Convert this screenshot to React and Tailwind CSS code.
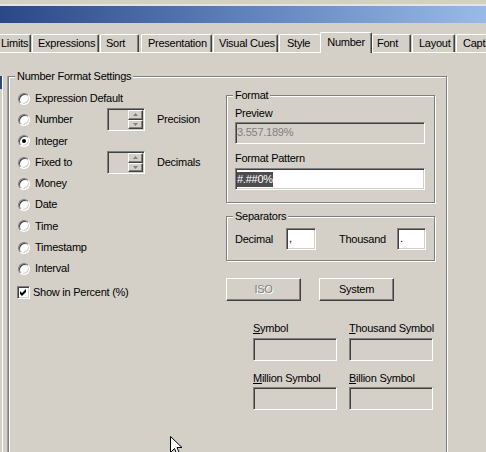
import React from "react";

// classic 3D borders
const sunken =
  "border border-t-[#808080] border-l-[#808080] border-b-white border-r-white shadow-[inset_1px_1px_0_#404040,inset_-1px_-1px_0_#d4d0c8]";
const raised =
  "border border-t-white border-l-white border-b-[#404040] border-r-[#404040] shadow-[inset_-1px_-1px_0_#808080]";
const etched =
  "relative border border-[#808080] shadow-[inset_1px_1px_0_#fff,1px_1px_0_#fff]";

const tabs = [
  { label: "Limits", cls: "ml-[-5px] w-[36px] pl-[5px]" },
  { label: "Expressions", cls: "ml-px w-[67px] pl-[5px]" },
  { label: "Sort", cls: "ml-px w-[39px] pl-[5px]" },
  { label: "Presentation", cls: "ml-[2px] w-[71px] pl-[6px]" },
  { label: "Visual Cues", cls: "ml-px w-[65px] pl-[5px]" },
  { label: "Style", cls: "ml-px w-[41px] pl-[7px] border-r-0 shadow-none" },
  { label: "Number", cls: "w-[52px]", selected: true },
  { label: "Font", cls: "w-[39px] pl-[4px]" },
  { label: "Layout", cls: "ml-px w-[43px] pl-[6px]" },
  { label: "Capti", cls: "ml-px w-[60px] pl-[6px]" },
];

const formats = [
  { label: "Expression Default", h: "h-[21px]" },
  { label: "Number", h: "h-[21px]", spin: "Precision" },
  { label: "Integer", h: "h-[22px]", checked: true },
  { label: "Fixed to", h: "h-[21px]", spin: "Decimals" },
  { label: "Money", h: "h-[21px]" },
  { label: "Date", h: "h-[21px]" },
  { label: "Time", h: "h-[22px]" },
  { label: "Timestamp", h: "h-[21px]" },
  { label: "Interval", h: "h-[21px]" },
];

const Tab = ({ label, cls, selected }) => {
  if (selected) {
    return (
      <div
        className={`relative z-10 shrink-0 h-[21px] mb-[-1px] bg-[#d4d0c8] rounded-t-[2px] border-t border-l border-white border-r border-r-[#404040] shadow-[inset_-1px_0_0_#808080] text-center leading-[18px] whitespace-nowrap ${cls}`}
      >
        {label}
      </div>
    );
  }
  return (
    <div
      className={`shrink-0 h-[18px] rounded-t-[2px] border-t border-l border-white border-r border-r-[#404040] shadow-[inset_-1px_0_0_#808080] leading-[16px] whitespace-nowrap overflow-hidden ${cls}`}
    >
      {label}
    </div>
  );
};

const Radio = ({ checked }) => (
  <span className="flex items-center justify-center shrink-0 w-[12px] h-[12px] rounded-full bg-white border border-t-[#808080] border-l-[#808080] border-b-white border-r-white shadow-[inset_1px_1px_0_#404040,inset_-1px_-1px_0_#d4d0c8]">
    {checked && <span className="w-[4px] h-[4px] rounded-full bg-black" />}
  </span>
);

const SpinBtn = ({ up }) => (
  <div className={`flex-1 flex items-center justify-center bg-[#d4d0c8] ${raised}`}>
    <svg width="5" height="3" viewBox="0 0 5 3">
      <path d={up ? "M2.5 0 L5 3 L0 3 Z" : "M0 0 L5 0 L2.5 3 Z"} fill="#808080" />
    </svg>
  </div>
);

const Spinner = () => (
  <div className={`w-[38px] h-[23px] bg-[#d4d0c8] flex justify-end py-px pr-px ${sunken}`}>
    <div className="flex flex-col w-[15px]">
      <SpinBtn up />
      <SpinBtn />
    </div>
  </div>
);

const GroupLabel = ({ children }) => (
  <span className="absolute left-[6px] top-[-7px] px-[2px] bg-[#d4d0c8] leading-[13px] whitespace-nowrap">
    {children}
  </span>
);

const SymbolField = ({ first, rest, className = "" }) => (
  <div className={className}>
    <div className="leading-[13px] whitespace-nowrap">
      <span className="underline underline-offset-1">{first}</span>
      {rest}
    </div>
  </div>
);

const App = () => {
  return (
    <div className="relative w-[486px] h-[452px] overflow-hidden bg-[#d4d0c8] text-black text-[11px] tracking-[-0.25px] font-['Liberation_Sans',Arial,sans-serif]">
      {/* Window title bar (cut off) */}
      <div className="h-[4px]" />
      <div className="h-[2px] bg-[#e6e4de]" />
      <div className="h-[17px] bg-linear-to-r from-[#2b4886] via-[#5e82ba] to-[#98bbe6]" />

      {/* Tabs */}
      <div className="flex items-end h-[20px] mt-[9px]">
        {tabs.map((t) => (
          <Tab key={t.label} {...t} />
        ))}
      </div>

      {/* Tab page */}
      <div className="border-t border-white pt-[23px] flex">
        {/* edge of neighbouring list */}
        <div className="flex w-[8px] shrink-0">
          <div className="w-[2px]">
            <div className="h-[13px] bg-[#2b4886]" />
          </div>
          <div className="w-px bg-white" />
          <div className="w-[4px]" />
          <div className="w-px bg-[#a0a0a0]" />
        </div>

        <div className={`w-[439px] h-[400px] shrink-0 flex ${etched}`}>
          <GroupLabel>Number Format Settings</GroupLabel>

          {/* Left: format type */}
          <div className="w-[217px] shrink-0 pl-[9px] pt-[11px]">
            {formats.map((f) => (
              <div key={f.label} className={`flex items-center ${f.h}`}>
                <Radio checked={f.checked} />
                <span className="ml-[5px] w-[72px] whitespace-nowrap">{f.label}</span>
                {f.spin && (
                  <>
                    <Spinner />
                    <span className="ml-[12px]">{f.spin}</span>
                  </>
                )}
              </div>
            ))}
            <div className="flex items-center h-[21px] mt-[3px] ml-[-1px]">
              <span className={`flex items-center justify-center w-[13px] h-[13px] bg-white ${sunken}`}>
                <svg width="7" height="7" viewBox="0 0 7 7">
                  <path d="M0 2 L2 4 L6 0 L6 3 L2 7 L0 5 Z" fill="#000" />
                </svg>
              </span>
              <span className="ml-[3px] whitespace-nowrap">Show in Percent (%)</span>
            </div>
          </div>

          {/* Right: format details */}
          <div className="w-[209px] shrink-0 pt-[18px]">
            <div className={`h-[108px] px-[8px] pt-[11px] ${etched}`}>
              <GroupLabel>Format</GroupLabel>
              <div className="leading-[13px]">Preview</div>
              <div className={`mt-[2px] w-[190px] h-[22px] bg-[#d4d0c8] text-[#808080] leading-[19px] pl-px ${sunken}`}>
                3.557.189%
              </div>
              <div className="mt-[8px] leading-[13px]">Format Pattern</div>
              <div className={`mt-[3px] w-[190px] h-[22px] bg-white leading-[19px] pl-px flex items-center ${sunken}`}>
                <span className="bg-[#4d4d4d] text-white leading-[15px]">#.##0%</span>
              </div>
            </div>

            <div className={`mt-[13px] h-[45px] px-[8px] pt-[11px] ${etched}`}>
              <GroupLabel>Separators</GroupLabel>
              <div className="flex items-center h-[22px]">
                <span className="w-[51px]">Decimal</span>
                <div className={`w-[30px] h-[22px] bg-white leading-[19px] pl-[2px] ${sunken}`}>,</div>
                <span className="ml-[23px] w-[58px]">Thousand</span>
                <div className={`w-[29px] h-[22px] bg-white leading-[19px] pl-[2px] ${sunken}`}>.</div>
              </div>
            </div>

            <div className="flex mt-[17px]">
              <div className={`w-[75px] h-[23px] flex items-center justify-center bg-[#d4d0c8] text-[#808080] [text-shadow:1px_1px_0_#fff] ${raised}`}>
                ISO
              </div>
              <div className={`ml-[18px] w-[75px] h-[23px] flex items-center justify-center bg-[#d4d0c8] ${raised}`}>
                System
              </div>
            </div>

            <div className="ml-[27px] mt-[21px] grid grid-cols-[84px_84px] gap-x-[12px]">
              <SymbolField first="S" rest="ymbol" />
              <SymbolField first="T" rest="housand Symbol" />
              <div className={`mt-[3px] h-[23px] bg-[#d4d0c8] ${sunken}`} />
              <div className={`mt-[3px] h-[23px] bg-[#d4d0c8] ${sunken}`} />
              <SymbolField first="M" rest="illion Symbol" className="mt-[11px]" />
              <SymbolField first="B" rest="illion Symbol" className="mt-[11px]" />
              <div className={`mt-[2px] h-[23px] bg-[#d4d0c8] ${sunken}`} />
              <div className={`mt-[2px] h-[23px] bg-[#d4d0c8] ${sunken}`} />
            </div>
          </div>
        </div>
      </div>

      {/* Mouse pointer */}
      <svg className="absolute left-[170px] top-[436px]" width="13" height="20" viewBox="0 0 13 20">
        <path
          d="M0.5 0.5 L0.5 16.5 L4.5 12.5 L7 18.5 L9.5 17.5 L7 11.5 L12 11.5 Z"
          fill="#fff"
          stroke="#000"
          strokeWidth="1"
        />
      </svg>
    </div>
  );
};

export default App;
